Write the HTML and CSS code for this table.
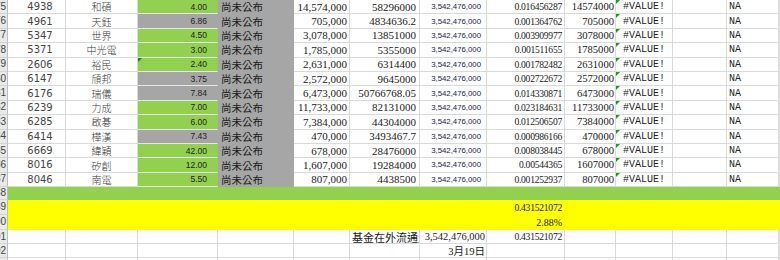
FILE: index.html
```html
<!DOCTYPE html>
<html>
<head>
<meta charset="utf-8">
<link rel="stylesheet" href="styles.css">
</head>
<body>
<div class="sheet">
  <div class="row data"><div class="hd"><span>75</span></div><div class="c a">4938</div><div class="c b">和碩</div><div class="c pe grn">4.00</div><div class="c st">尚未公布</div><div class="c e">14,574,000</div><div class="c f">58296000</div><div class="c cap">3,542,476,000</div><div class="c w">0.016456287</div><div class="c i">14574000</div><div class="c j err">#VALUE!</div><div class="c k"></div><div class="c l">NA</div><div class="c m"></div></div>
  <div class="row data"><div class="hd"><span>76</span></div><div class="c a">4961</div><div class="c b">天鈺</div><div class="c pe gry">6.86</div><div class="c st">尚未公布</div><div class="c e">705,000</div><div class="c f">4834636.2</div><div class="c cap">3,542,476,000</div><div class="c w">0.001364762</div><div class="c i">705000</div><div class="c j err">#VALUE!</div><div class="c k"></div><div class="c l">NA</div><div class="c m"></div></div>
  <div class="row data"><div class="hd"><span>77</span></div><div class="c a">5347</div><div class="c b">世界</div><div class="c pe grn">4.50</div><div class="c st">尚未公布</div><div class="c e">3,078,000</div><div class="c f">13851000</div><div class="c cap">3,542,476,000</div><div class="c w">0.003909977</div><div class="c i">3078000</div><div class="c j err">#VALUE!</div><div class="c k"></div><div class="c l">NA</div><div class="c m"></div></div>
  <div class="row data"><div class="hd"><span>78</span></div><div class="c a">5371</div><div class="c b">中光電</div><div class="c pe grn">3.00</div><div class="c st">尚未公布</div><div class="c e">1,785,000</div><div class="c f">5355000</div><div class="c cap">3,542,476,000</div><div class="c w">0.001511655</div><div class="c i">1785000</div><div class="c j err">#VALUE!</div><div class="c k"></div><div class="c l">NA</div><div class="c m"></div></div>
  <div class="row data"><div class="hd"><span>79</span></div><div class="c a">2606</div><div class="c b">裕民</div><div class="c pe grn flag">2.40</div><div class="c st">尚未公布</div><div class="c e">2,631,000</div><div class="c f">6314400</div><div class="c cap">3,542,476,000</div><div class="c w">0.001782482</div><div class="c i">2631000</div><div class="c j err">#VALUE!</div><div class="c k"></div><div class="c l">NA</div><div class="c m"></div></div>
  <div class="row data"><div class="hd"><span>80</span></div><div class="c a">6147</div><div class="c b">頎邦</div><div class="c pe gry">3.75</div><div class="c st">尚未公布</div><div class="c e">2,572,000</div><div class="c f">9645000</div><div class="c cap">3,542,476,000</div><div class="c w">0.002722672</div><div class="c i">2572000</div><div class="c j err">#VALUE!</div><div class="c k"></div><div class="c l">NA</div><div class="c m"></div></div>
  <div class="row data"><div class="hd"><span>81</span></div><div class="c a">6176</div><div class="c b">瑞儀</div><div class="c pe gry">7.84</div><div class="c st">尚未公布</div><div class="c e">6,473,000</div><div class="c f">50766768.05</div><div class="c cap">3,542,476,000</div><div class="c w">0.014330871</div><div class="c i">6473000</div><div class="c j err">#VALUE!</div><div class="c k"></div><div class="c l">NA</div><div class="c m"></div></div>
  <div class="row data"><div class="hd"><span>82</span></div><div class="c a">6239</div><div class="c b">力成</div><div class="c pe grn">7.00</div><div class="c st">尚未公布</div><div class="c e">11,733,000</div><div class="c f">82131000</div><div class="c cap">3,542,476,000</div><div class="c w">0.023184631</div><div class="c i">11733000</div><div class="c j err">#VALUE!</div><div class="c k"></div><div class="c l">NA</div><div class="c m"></div></div>
  <div class="row data"><div class="hd"><span>83</span></div><div class="c a">6285</div><div class="c b">啟碁</div><div class="c pe grn">6.00</div><div class="c st">尚未公布</div><div class="c e">7,384,000</div><div class="c f">44304000</div><div class="c cap">3,542,476,000</div><div class="c w">0.012506507</div><div class="c i">7384000</div><div class="c j err">#VALUE!</div><div class="c k"></div><div class="c l">NA</div><div class="c m"></div></div>
  <div class="row data"><div class="hd"><span>84</span></div><div class="c a">6414</div><div class="c b">樺漢</div><div class="c pe gry">7.43</div><div class="c st">尚未公布</div><div class="c e">470,000</div><div class="c f">3493467.7</div><div class="c cap">3,542,476,000</div><div class="c w">0.000986166</div><div class="c i">470000</div><div class="c j err">#VALUE!</div><div class="c k"></div><div class="c l">NA</div><div class="c m"></div></div>
  <div class="row data"><div class="hd"><span>85</span></div><div class="c a">6669</div><div class="c b">緯穎</div><div class="c pe grn">42.00</div><div class="c st">尚未公布</div><div class="c e">678,000</div><div class="c f">28476000</div><div class="c cap">3,542,476,000</div><div class="c w">0.008038445</div><div class="c i">678000</div><div class="c j err">#VALUE!</div><div class="c k"></div><div class="c l">NA</div><div class="c m"></div></div>
  <div class="row data"><div class="hd"><span>86</span></div><div class="c a">8016</div><div class="c b">矽創</div><div class="c pe grn">12.00</div><div class="c st">尚未公布</div><div class="c e">1,607,000</div><div class="c f">19284000</div><div class="c cap">3,542,476,000</div><div class="c w">0.00544365</div><div class="c i">1607000</div><div class="c j err">#VALUE!</div><div class="c k"></div><div class="c l">NA</div><div class="c m"></div></div>
  <div class="row data"><div class="hd"><span>87</span></div><div class="c a">8046</div><div class="c b">南電</div><div class="c pe grn">5.50</div><div class="c st">尚未公布</div><div class="c e">807,000</div><div class="c f">4438500</div><div class="c cap">3,542,476,000</div><div class="c w">0.001252937</div><div class="c i">807000</div><div class="c j err">#VALUE!</div><div class="c k"></div><div class="c l">NA</div><div class="c m"></div></div>
  <div class="row band-green"><div class="hd"><span>88</span></div><div class="fill"></div></div>
  <div class="row band-yellow"><div class="hd"><span>89</span></div><div class="fill"></div><div class="c w yv">0.431521072</div><div class="fill2"></div></div>
  <div class="row band-yellow"><div class="hd"><span>90</span></div><div class="fill"></div><div class="c w pct">2.88%</div><div class="fill2"></div></div>
  <div class="row plain"><div class="hd"><span>91</span></div><div class="c a"></div><div class="c b"></div><div class="c"></div><div class="c"></div><div class="c"></div><div class="c lbl">基金在外流通量</div><div class="c tot">3,542,476,000</div><div class="c w">0.431521072</div><div class="c"></div><div class="c"></div><div class="c"></div><div class="c"></div><div class="c"></div></div>
  <div class="row plain"><div class="hd"><span>92</span></div><div class="c a"></div><div class="c b"></div><div class="c"></div><div class="c"></div><div class="c"></div><div class="c"></div><div class="c tot">3月19日</div><div class="c"></div><div class="c"></div><div class="c"></div><div class="c"></div><div class="c"></div><div class="c"></div></div>
  <div class="row plain"><div class="hd"><span>93</span></div><div class="c a"></div><div class="c b"></div><div class="c"></div><div class="c"></div><div class="c"></div><div class="c"></div><div class="c"></div><div class="c"></div><div class="c"></div><div class="c"></div><div class="c"></div><div class="c"></div><div class="c"></div></div>
</div>
</body>
</html>
```

FILE: styles.css
```css
html, body {
  margin: 0;
  padding: 0;
  background: #ffffff;
}
body {
  width: 780px;
  height: 260px;
  overflow: hidden;
}
.sheet {
  display: flex;
  flex-direction: column;
}
.row {
  display: grid;
  grid-template-columns: 8px 58px 72px 80px 76px 56px 70px 67px 78px 51px 57px 54px 52px 1fr;
  height: 14.4px;
  flex: none;
}
.row.band-green { height: 13px; }
.row.band-yellow { height: 15px; }
.row.plain { height: 14px; }

.hd {
  box-sizing: border-box;
  background: #e9e9e9;
  border-right: 1px solid #bdbdbd;
  border-bottom: 1px solid #d4d4d4;
  display: flex;
  align-items: center;
  justify-content: flex-end;
  overflow: hidden;
  padding-right: 1px;
  font: 10px "Liberation Sans", Arial, sans-serif;
  color: #444;
  line-height: 12px;
  white-space: nowrap;
}

.c {
  box-sizing: border-box;
  border-right: 1px solid #dadada;
  border-bottom: 1px solid #dadada;
  overflow: hidden;
  white-space: nowrap;
  display: flex;
  align-items: center;
  line-height: 13px;
  position: relative;
  color: #1a1a1a;
  font: 11px "Liberation Serif", "Noto Sans CJK TC", serif;
}

.a {
  font: 10px "DejaVu Sans", sans-serif;
  color: #454545;
  justify-content: center;
  padding-left: 7px;
}
.b {
  font: 300 10px "Noto Sans CJK TC", sans-serif;
  color: #3a3a3a;
  justify-content: center;
}
.pe {
  font: 8.5px "Liberation Sans", Arial, sans-serif;
  color: #222;
  justify-content: flex-end;
  padding-right: 10px;
  border-bottom-color: #e6e6e6;
}
.grn { background: #92d050; border-right-color: #92d050; }
.gry { background: #a6a6a6; border-right-color: #a6a6a6; }
.flag::before {
  content: "";
  position: absolute;
  left: 0;
  top: 0;
  border-top: 4px solid #1f7a1f;
  border-right: 4px solid transparent;
}
.st {
  font: 10.5px "Noto Sans CJK TC", sans-serif;
  color: #1a1a1a;
  background: #a6a6a6;
  border-right-color: #a6a6a6;
  border-bottom-color: #a6a6a6;
  padding-left: 3px;
}
.e {
  justify-content: flex-end;
  padding-right: 2px;
}
.f {
  justify-content: flex-end;
  padding-right: 3px;
}
.cap {
  font: 7.8px "Liberation Sans", Arial, sans-serif;
  color: #17224a;
  justify-content: flex-end;
  padding-right: 5px;
}
.w {
  font: 9.6px "Liberation Serif", serif;
  letter-spacing: -0.25px;
  justify-content: flex-end;
  padding-right: 2px;
}
.i {
  font: 10.6px "Liberation Serif", serif;
  justify-content: flex-end;
  padding-right: 1px;
}
.j {
  font: 10px "Liberation Mono", monospace;
  color: #222;
  justify-content: center;
}
.err::before {
  content: "";
  position: absolute;
  left: 0;
  top: 0;
  border-top: 4px solid #1a9a1a;
  border-right: 4px solid transparent;
}
.l {
  font: 10px "Liberation Mono", monospace;
  color: #222;
  padding-left: 2px;
}

.fill {
  grid-column: 2 / 15;
}
.band-green .fill { background: #92d050; }
.band-yellow .fill { grid-column: 2 / 9; background: #ffff00; }
.band-yellow .fill2 { grid-column: 10 / 15; background: #ffff00; }
.band-yellow .c {
  background: #ffff00;
  border-color: #ffff00;
}
.pct {
  font: 10px "Liberation Serif", serif;
  letter-spacing: 0;
}
.lbl {
  font: 11px "Noto Sans CJK TC", sans-serif;
  padding-left: 2px;
}
.tot {
  font: 10.5px "Liberation Serif", "Noto Sans CJK TC", serif;
  justify-content: flex-end;
  padding-right: 1px;
}
```
